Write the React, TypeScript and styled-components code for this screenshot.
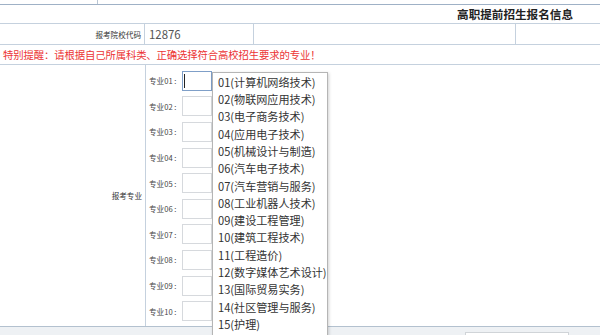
import styled, { createGlobalStyle } from 'styled-components';

const GlobalStyle = createGlobalStyle`
  html, body {
    margin: 0;
    padding: 0;
    background: #ffffff;
    overflow: hidden;
  }
  body {
    font-family: "Noto Sans CJK SC", "Liberation Sans", sans-serif;
    color: #333333;
  }
`;

const LINE = '#c5d1de';

// 전체 페이지
const Page = styled.div`
  width: 600px;
  height: 335px;
  display: flex;
  flex-direction: column;
  overflow: hidden;
`;

// 위쪽 이전 표의 끝 부분
const TopStub = styled.div`
  height: 4px;
  display: flex;
  border-bottom: 1px solid #9fb1c6;
`;

const StubCell = styled.div`
  width: 97px;
  border-right: 1px solid #b9c6d4;
`;

// 제목 줄
const TitleRow = styled.div`
  height: 18px;
  line-height: 18px;
  text-align: right;
  padding-right: 27px;
  font-size: 11.6px;
  font-weight: bold;
  color: #222222;
  border-bottom: 1px solid ${LINE};
`;

// 학교 코드 줄
const CodeRow = styled.div`
  height: 20px;
  display: grid;
  grid-template-columns: 145px 109px 262px 1fr;
  border-bottom: 1px solid ${LINE};
`;

const Cell = styled.div<{ $right?: boolean }>`
  border-right: 1px solid ${(p) => (p.$right ? LINE : 'transparent')};
  display: flex;
  align-items: center;
`;

const SmallLabel = styled.span`
  font-size: 7.6px;
  color: #333333;
  margin-left: auto;
  padding-right: 3px;
  white-space: nowrap;
`;

const CodeValue = styled.span`
  font-size: 11.4px;
  color: #555555;
  padding-left: 4px;
`;

// 빨간 안내 문구
const NoticeRow = styled.div`
  height: 19px;
  line-height: 19px;
  padding-left: 3px;
  font-size: 10.4px;
  letter-spacing: -0.15px;
  color: #ec3434;
  white-space: nowrap;
  border-bottom: 1px solid ${LINE};
`;

// 전공 선택 영역
const MajorRow = styled.div`
  height: 261px;
  display: grid;
  grid-template-columns: 146px 1fr;
  border-bottom: 1px solid #b3c1cf;
`;

const MajorLabelCell = styled.div`
  border-right: 1px solid ${LINE};
  display: flex;
  align-items: center;
  justify-content: flex-end;
  padding-right: 0;
`;

const MajorFields = styled.div`
  padding-top: 3px;
  display: flex;
  flex-direction: column;
`;

const FieldRow = styled.div`
  height: 25.6px;
  display: flex;
  align-items: center;
  padding-left: 3px;
`;

const FieldLabel = styled.span`
  width: 31px;
  font-size: 7.6px;
  color: #444444;
  white-space: nowrap;
`;

const InputWrap = styled.div`
  position: relative;
  margin-left: 2px;
`;

const FieldInput = styled.div<{ $focused?: boolean }>`
  width: 28px;
  height: 18px;
  background: #ffffff;
  border: 1px solid ${(p) => (p.$focused ? '#7f9fc8' : '#d6d9dd')};
`;

const Caret = styled.span`
  position: absolute;
  left: 2px;
  top: 3px;
  width: 1px;
  height: 14px;
  background: #222222;
`;

// 드롭다운 목록
const Dropdown = styled.ul`
  position: absolute;
  left: 30px;
  top: 1px;
  width: 114px;
  margin: 0;
  padding: 1px 0 2px 0;
  list-style: none;
  background: #ffffff;
  border: 1px solid #b5b5b5;
  box-shadow: 1px 1px 3px rgba(0, 0, 0, 0.18);
  z-index: 2;
`;

const DropdownItem = styled.li`
  height: 17.3px;
  line-height: 17.3px;
  padding-left: 5px;
  font-size: 11.1px;
  color: #333333;
  white-space: nowrap;
`;

// 아래 회색 부분
const Footer = styled.div`
  flex: 1;
  background: #eef1f4;
  display: flex;
  align-items: flex-end;
  padding-left: 465px;
`;

const FooterBox = styled.div`
  width: 102px;
  height: 2px;
  background: #ffffff;
  border: 1px solid #d0d4d8;
  border-bottom: none;
`;

const majors = [
  '计算机网络技术',
  '物联网应用技术',
  '电子商务技术',
  '应用电子技术',
  '机械设计与制造',
  '汽车电子技术',
  '汽车营销与服务',
  '工业机器人技术',
  '建设工程管理',
  '建筑工程技术',
  '工程造价',
  '数字媒体艺术设计',
  '国际贸易实务',
  '社区管理与服务',
  '护理',
];

const pad = (n: number) => (n < 10 ? '0' + n : '' + n);

export default function App() {
  return (
    <Page>
      <GlobalStyle />
      <TopStub>
        <StubCell />
      </TopStub>
      <TitleRow>高职提前招生报名信息</TitleRow>
      <CodeRow>
        <Cell $right>
          <SmallLabel>报考院校代码</SmallLabel>
        </Cell>
        <Cell $right>
          <CodeValue>12876</CodeValue>
        </Cell>
        <Cell $right />
        <Cell />
      </CodeRow>
      <NoticeRow>特别提醒：请根据自己所属科类、正确选择符合高校招生要求的专业！</NoticeRow>
      <MajorRow>
        <MajorLabelCell>
          <SmallLabel>报考专业</SmallLabel>
        </MajorLabelCell>
        <MajorFields>
          {Array.from({ length: 10 }, (_, i) => (
            <FieldRow key={i}>
              <FieldLabel>专业{pad(i + 1)} :</FieldLabel>
              <InputWrap>
                <FieldInput $focused={i === 0} />
                {i === 0 && <Caret />}
                {i === 0 && (
                  <Dropdown>
                    {majors.map((m, j) => (
                      <DropdownItem key={j}>
                        {pad(j + 1)}({m})
                      </DropdownItem>
                    ))}
                  </Dropdown>
                )}
              </InputWrap>
            </FieldRow>
          ))}
        </MajorFields>
      </MajorRow>
      <Footer>
        <FooterBox />
      </Footer>
    </Page>
  );
}
